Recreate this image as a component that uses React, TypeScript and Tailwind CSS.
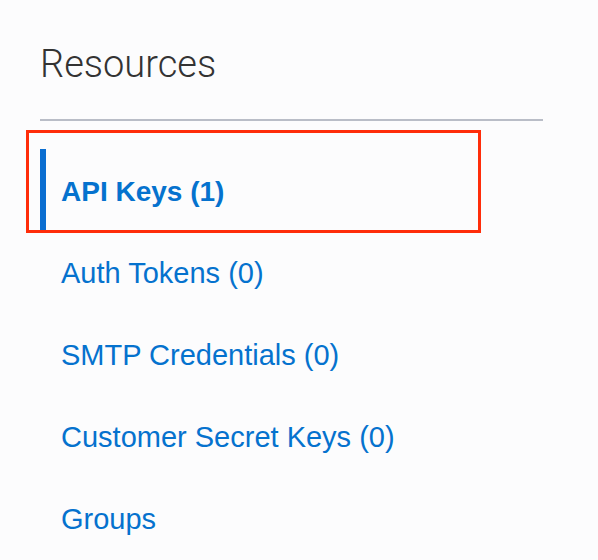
import React from 'react';

const items = [
  { label: 'API Keys (1)', active: true },
  { label: 'Auth Tokens (0)' },
  { label: 'SMTP Credentials (0)' },
  { label: 'Customer Secret Keys (0)' },
  { label: 'Groups' },
];

export default function App() {
  return (
    <div className="min-h-screen w-[598px] bg-[#fcfcfd] pl-10 pt-[44px] font-['Liberation_Sans',Arial,sans-serif]">
      {/* Heading */}
      <h1 className="text-[38px] leading-[40px] font-light text-[#333] font-['Roboto','Liberation_Sans',sans-serif]">
        Resources
      </h1>
      <div className="mt-[35px] h-[2px] w-[503px] bg-[#b9bdc7]" />

      {/* Resource links */}
      <ul className="relative mt-[28px]">
        {items.map((item) =>
          item.active ? (
            <li
              key={item.label}
              className="flex h-[82px] items-center border-l-[6px] border-[#0a6ed1] pl-[15px] pt-[4px] text-[28px] font-bold text-[#0572ce]"
            >
              {item.label}
            </li>
          ) : (
            <li
              key={item.label}
              className="flex h-[82px] items-center pl-[21px] pt-[4px] text-[29px] text-[#0572ce]"
            >
              {item.label}
            </li>
          )
        )}
        {/* highlight box */}
        <div className="pointer-events-none absolute left-[-14px] top-[-19px] h-[103px] w-[455px] border-[3px] border-[#ff2d0a]" />
      </ul>
    </div>
  );
}
